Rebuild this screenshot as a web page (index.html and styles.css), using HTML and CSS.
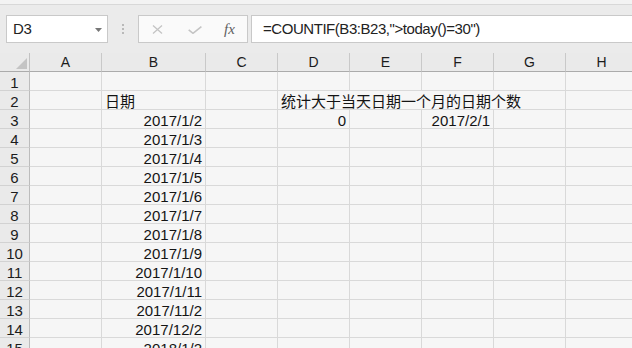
FILE: index.html
```html
<!DOCTYPE html>
<html lang="zh-CN">
<head>
<meta charset="utf-8">
<title>COUNTIF</title>
<link rel="stylesheet" href="styles.css">
</head>
<body>
<div class="app">
  <div class="topstrip"></div>
  <div class="toolbar">
    <div class="namebox">
      <span class="name">D3</span>
      <svg class="dd" width="7" height="4" viewBox="0 0 7 4"><polygon points="0,0 7,0 3.5,4" fill="#777"/></svg>
    </div>
    <div class="grip"><i></i><i></i><i></i></div>
    <div class="fxbox">
      <svg class="ico-x" width="11" height="9" viewBox="0 0 11 9"><path d="M1 0.5 L10 8.5 M10 0.5 L1 8.5" stroke="#c4c4c4" stroke-width="1.3" fill="none"/></svg>
      <svg class="ico-ok" width="14" height="8" viewBox="0 0 14 8"><polyline points="0.7,3.8 5,7.3 13.4,0.6" stroke="#c4c4c4" stroke-width="1.6" fill="none"/></svg>
      <span class="fx">fx</span>
    </div>
    <div class="formula">=COUNTIF(B3:B23,"&gt;today()=30")</div>
  </div>
  <div class="sheet">
    <div class="corner"><svg width="11" height="11" viewBox="0 0 11 11"><polygon points="11,0 11,11 0,11" fill="#c4c4c4"/></svg></div>
    <div class="ch">A</div><div class="ch">B</div><div class="ch">C</div><div class="ch">D</div><div class="ch">E</div><div class="ch">F</div><div class="ch">G</div><div class="ch">H</div>

    <div class="rh">1</div><div class="c"></div><div class="c"></div><div class="c"></div><div class="c"></div><div class="c"></div><div class="c"></div><div class="c"></div><div class="c"></div>

    <div class="rh">2</div><div class="c"></div><div class="c">日期</div><div class="c"></div><div class="c span4">统计大于当天日期一个月的日期个数</div><div class="c"></div>

    <div class="rh">3</div><div class="c"></div><div class="c r">2017/1/2</div><div class="c"></div><div class="c r">0</div><div class="c"></div><div class="c r">2017/2/1</div><div class="c"></div><div class="c"></div>

    <div class="rh">4</div><div class="c"></div><div class="c r">2017/1/3</div><div class="c"></div><div class="c"></div><div class="c"></div><div class="c"></div><div class="c"></div><div class="c"></div>

    <div class="rh">5</div><div class="c"></div><div class="c r">2017/1/4</div><div class="c"></div><div class="c"></div><div class="c"></div><div class="c"></div><div class="c"></div><div class="c"></div>

    <div class="rh">6</div><div class="c"></div><div class="c r">2017/1/5</div><div class="c"></div><div class="c"></div><div class="c"></div><div class="c"></div><div class="c"></div><div class="c"></div>

    <div class="rh">7</div><div class="c"></div><div class="c r">2017/1/6</div><div class="c"></div><div class="c"></div><div class="c"></div><div class="c"></div><div class="c"></div><div class="c"></div>

    <div class="rh">8</div><div class="c"></div><div class="c r">2017/1/7</div><div class="c"></div><div class="c"></div><div class="c"></div><div class="c"></div><div class="c"></div><div class="c"></div>

    <div class="rh">9</div><div class="c"></div><div class="c r">2017/1/8</div><div class="c"></div><div class="c"></div><div class="c"></div><div class="c"></div><div class="c"></div><div class="c"></div>

    <div class="rh">10</div><div class="c"></div><div class="c r">2017/1/9</div><div class="c"></div><div class="c"></div><div class="c"></div><div class="c"></div><div class="c"></div><div class="c"></div>

    <div class="rh">11</div><div class="c"></div><div class="c r">2017/1/10</div><div class="c"></div><div class="c"></div><div class="c"></div><div class="c"></div><div class="c"></div><div class="c"></div>

    <div class="rh">12</div><div class="c"></div><div class="c r">2017/1/11</div><div class="c"></div><div class="c"></div><div class="c"></div><div class="c"></div><div class="c"></div><div class="c"></div>

    <div class="rh">13</div><div class="c"></div><div class="c r">2017/11/2</div><div class="c"></div><div class="c"></div><div class="c"></div><div class="c"></div><div class="c"></div><div class="c"></div>

    <div class="rh">14</div><div class="c"></div><div class="c r">2017/12/2</div><div class="c"></div><div class="c"></div><div class="c"></div><div class="c"></div><div class="c"></div><div class="c"></div>

    <div class="rh">15</div><div class="c"></div><div class="c r">2018/1/2</div><div class="c"></div><div class="c"></div><div class="c"></div><div class="c"></div><div class="c"></div><div class="c"></div>
  </div>
</div>
</body>
</html>
```

FILE: styles.css
```css
html, body {
  margin: 0;
  padding: 0;
}
body {
  width: 632px;
  height: 348px;
  overflow: hidden;
  background: #f6f6f6;
  font-family: "Liberation Sans", "Noto Sans CJK SC", sans-serif;
  color: #141414;
}
.app {
  display: flex;
  flex-direction: column;
  width: 632px;
  height: 348px;
  overflow: hidden;
}
.topstrip {
  height: 4px;
  background: #f3f3f3;
  border-bottom: 1px solid #d8d8d8;
  flex: none;
}
.toolbar {
  flex: none;
  height: 48px;
  box-sizing: border-box;
  padding: 10px 0 0 6px;
  background: #ebebeb;
  display: flex;
  align-items: flex-start;
}
.namebox {
  width: 102px;
  height: 28px;
  box-sizing: border-box;
  border: 1px solid #c9c9c9;
  background: #ffffff;
  display: flex;
  align-items: center;
  justify-content: space-between;
  padding: 0 5px 0 6px;
}
.name {
  font-size: 15px;
  line-height: 26px;
  color: #222;
  letter-spacing: -0.3px;
}
.dd {
  display: block;
  margin-top: 1px;
}
.grip {
  width: 2px;
  margin: 9px 0 0 14px;
  display: flex;
  flex-direction: column;
  gap: 2px;
}
.grip i {
  display: block;
  width: 2px;
  height: 2px;
  background: #b9b9b9;
}
.fxbox {
  margin-left: 14px;
  width: 110px;
  height: 28px;
  box-sizing: border-box;
  border: 1px solid #c9c9c9;
  background: #fafafa;
  display: flex;
  align-items: center;
  padding-left: 13px;
}
.ico-x {
  display: block;
}
.ico-ok {
  display: block;
  margin-left: 25px;
  margin-top: 1px;
}
.fx {
  margin-left: 22px;
  font-family: "Liberation Serif", serif;
  font-style: italic;
  font-size: 15px;
  color: #606060;
  line-height: 26px;
}
.formula {
  margin-left: 3px;
  flex: 1;
  height: 28px;
  box-sizing: border-box;
  border: 1px solid #c9c9c9;
  border-right: none;
  background: #ffffff;
  padding-left: 11px;
  font-size: 15px;
  letter-spacing: -0.45px;
  line-height: 26px;
  color: #222;
  white-space: nowrap;
}
.sheet {
  flex: none;
  display: grid;
  grid-template-columns: 30px 72px 104px 72px 72px 72px 72px 72px 72px;
  grid-auto-rows: 19px;
  width: 638px;
}
.sheet > div {
  box-sizing: border-box;
  white-space: nowrap;
  font-size: 15px;
  line-height: 17px;
  padding-top: 2px;
}
.corner {
  background: #eaeaea;
  border-right: 1px solid #c2c2c2;
  border-bottom: 1px solid #ababab;
  display: flex;
  justify-content: flex-end;
  align-items: flex-end;
  padding: 0 2px 2px 0;
}
.corner svg {
  display: block;
}
.sheet > .ch {
  background: #eaeaea;
  border-right: 1px solid #c9c9c9;
  border-bottom: 1px solid #ababab;
  text-align: center;
  font-size: 14px;
  padding-top: 1px;
  color: #1c1c1c;
}
.sheet > .rh {
  background: #eaeaea;
  border-right: 1px solid #bcbcbc;
  border-bottom: 1px solid #d2d2d2;
  text-align: center;
  color: #1c1c1c;
}
.c {
  background: #f6f6f6;
  border-right: 1px solid #d9d9d9;
  border-bottom: 1px solid #d9d9d9;
  padding-left: 3px;
  padding-right: 3px;
}
.r {
  text-align: right;
}
.span4 {
  grid-column: span 4;
}
```
